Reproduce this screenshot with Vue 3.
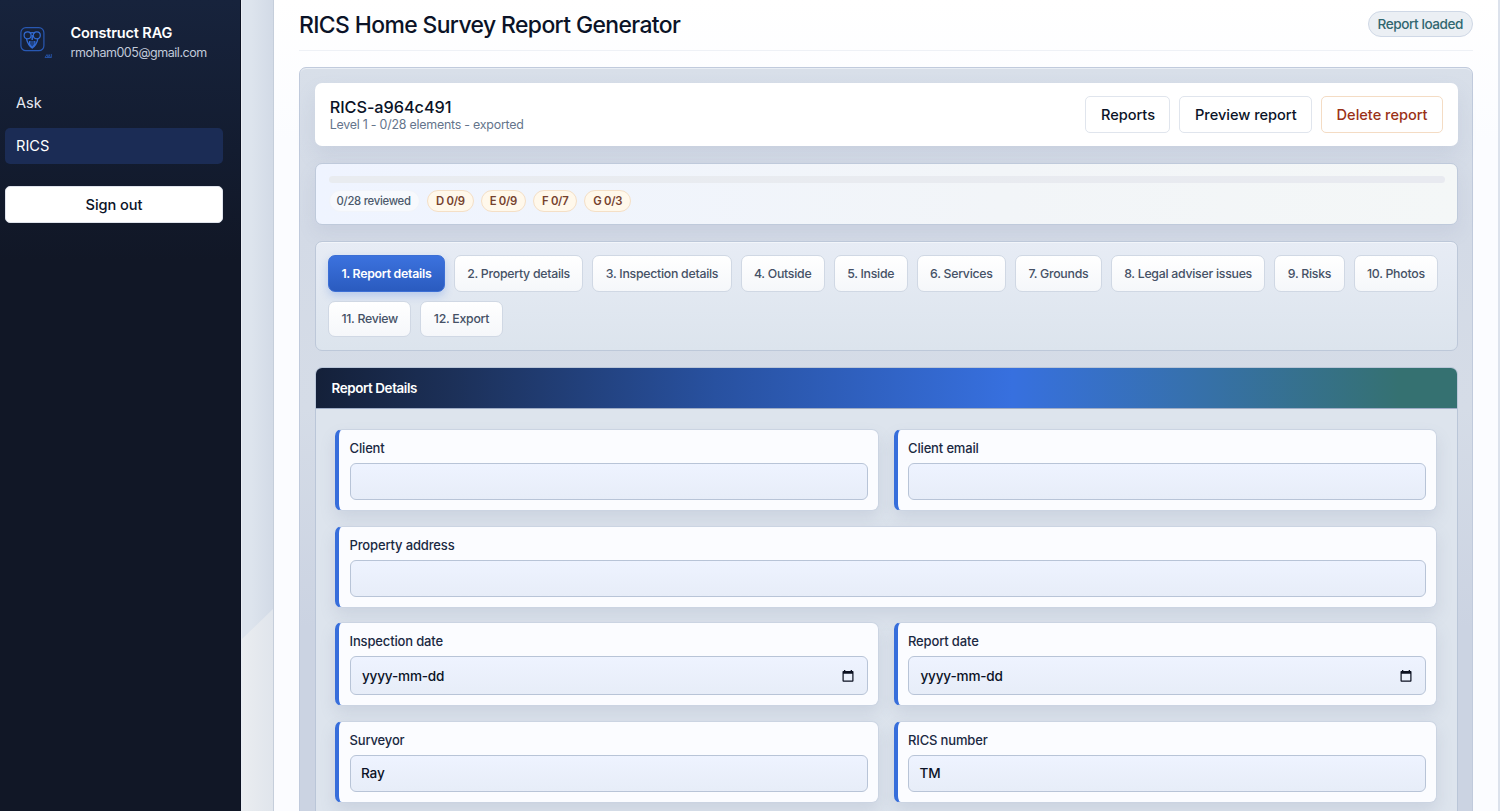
<script setup>
const tabs = [
  '1. Report details', '2. Property details', '3. Inspection details', '4. Outside', '5. Inside',
  '6. Services', '7. Grounds', '8. Legal adviser issues', '9. Risks', '10. Photos', '11. Review', '12. Export',
]
const chips = ['D 0/9', 'E 0/9', 'F 0/7', 'G 0/3']
const fields = [
  { label: 'Client', value: '' },
  { label: 'Client email', value: '' },
  { label: 'Property address', value: '', wide: true },
  { label: 'Inspection date', value: 'yyyy-mm-dd', date: true },
  { label: 'Report date', value: 'yyyy-mm-dd', date: true },
  { label: 'Surveyor', value: 'Ray' },
  { label: 'RICS number', value: 'TM' },
]
</script>

<template>
  <div class="app">
    <aside class="sidebar">
      <div class="brand">
        <svg class="logo" width="36" height="38" viewBox="0 0 36 38" fill="none">
          <rect x="3.900" y="3.700" width="23" height="23" rx="5" stroke="#2858b2" stroke-width="1.2" />
          <g stroke="#326bd4" stroke-width="1.200">
            <circle cx="10.600" cy="11.300" r="3.500" />
            <circle cx="19.800" cy="11.300" r="3.500" />
            <path d="M12.700 9.300q2.500-1.500 5 0" />
            <path d="M9.500 15c.8 3.500 2.200 6.600 5.700 9 3.500-2.400 4.900-5.500 5.700-9" />
            <path d="M15.200 11v5" stroke-width="1.500" />
            <path d="M12.700 17l-.3 3 2.800 3.500 2.800-3.500-.3-3" fill="#2858b2" fill-opacity=".6" />
          </g>
          <path d="M28 33.500l2-3 1 3M31.500 33.500l.6-3 1.200 3M34.300 30v3.500M28 33.500h6.500" stroke="#244f9f" stroke-width="1" />
        </svg>
        <div class="who">
          <strong>Construct RAG</strong>
          <span>rmoham005@gmail.com</span>
        </div>
      </div>
      <nav>
        <a>Ask</a>
        <a class="active">RICS</a>
      </nav>
      <button class="signout">Sign out</button>
    </aside>
    <div class="gutter"></div>
    <main class="shell">
      <header class="top">
        <h1>RICS Home Survey Report Generator</h1>
        <span class="status">Report loaded</span>
      </header>
      <section class="workspace">
        <div class="summary">
          <div class="ident">
            <h2>RICS-a964c491</h2>
            <p>Level 1 - 0/28 elements - exported</p>
          </div>
          <div class="actions">
            <button>Reports</button>
            <button>Preview report</button>
            <button class="danger">Delete report</button>
          </div>
        </div>
        <div class="progress">
          <div class="bar"></div>
          <div class="chips">
            <span class="chip plain">0/28 reviewed</span>
            <span v-for="c in chips" :key="c" class="chip">{{ c }}</span>
          </div>
        </div>
        <div class="tabs">
          <button v-for="(t, i) in tabs" :key="t" :class="{ on: i === 0 }">{{ t }}</button>
        </div>
        <div class="panel">
          <h3>Report Details</h3>
          <div class="grid">
            <label v-for="f in fields" :key="f.label" class="field" :class="{ wide: f.wide }">
              <span class="name">{{ f.label }}</span>
              <span class="input" :class="{ date: f.date }">
                <span>{{ f.value }}</span>
                <svg v-if="f.date" width="12" height="12" viewBox="0 0 12 12">
                  <path fill="#0b1020" fill-rule="evenodd" d="M2 0h1.300v1h5.400V0H10v1h.700a.800.800 0 0 1 .800.800v9a.900.900 0 0 1-.900.900H1.400a.900.900 0 0 1-.900-.900v-9A.800.800 0 0 1 1.300 1H2zM1.700 3.700v6.800h8.600V3.700z" />
                </svg>
              </span>
            </label>
          </div>
        </div>
      </section>
    </main>
  </div>
</template>

<style>
body { overflow: hidden; }
</style>

<style scoped>
* { box-sizing: border-box; margin: 0; }
.app {
  display: flex; width: 1500px; height: 811px; overflow: hidden;
  font-family: Inter, "Liberation Sans", sans-serif; color: #0b1327; background: #fff;
}
button { font-family: inherit; white-space: nowrap; padding: 0; }
.sidebar {
  flex: 0 0 241px; padding: 21px 17px 0 5px;
  background: linear-gradient(180deg, #17233c 0, #131c30 150px, #111726 260px, #111726 100%);
  border-right: 1px solid #0b1121;
}
.brand { display: flex; padding-left: 12px; height: 64px; }
.logo { flex: none; margin-top: 3px; }
.who { margin-left: 17.500px; display: flex; flex-direction: column; padding-top: 2px; }
.who strong { font-size: 14.500px; line-height: 20px; font-weight: 600; color: #fff; letter-spacing: -.15px; }
.who span { font-size: 12.500px; line-height: 18px; color: #c1cada; margin-top: 1px; letter-spacing: -.46px; }
nav { display: flex; flex-direction: column; gap: 7px; }
nav a { height: 36px; line-height: 37px; padding-left: 11px; font-size: 14.600px; color: #e6eaf2; border-radius: 5px; }
nav a.active { background: #1b2c55; color: #fff; }
.signout {
  display: block; width: 100%; height: 37px; margin-top: 22px; border: 1px solid #dfe3ec; border-radius: 5px;
  background: #fff; font-size: 14.600px; font-weight: 500; color: #0b1327; letter-spacing: -.05px;
}
.gutter {
  flex: 0 0 33px; border-left: 1px solid #e9edf3; border-right: 1px solid #c5cedb;
  background:
    linear-gradient(90deg, rgba(190, 200, 218, 0) 30%, rgba(190, 200, 218, .35) 100%),
    #dde4ed;
  position: relative;
}
.gutter::after {
  content: ""; position: absolute; inset: 609px 0 0 0;
  clip-path: polygon(0 30px, 100% 0, 100% 100%, 0 100%);
  background: linear-gradient(90deg, #eaedf0, #e0e5ec);
}
.shell {
  flex: 1; padding: 0 25px 0 25px; border-right: 2px solid #dce2ec;
  background: linear-gradient(180deg, #fff, #fbfcff 140px);
}
.top {
  display: flex; align-items: center; justify-content: space-between;
  height: 51px; border-bottom: 1px solid #eef1f6;
}
h1 { font-size: 22.900px; line-height: 28px; font-weight: 500; white-space: nowrap; letter-spacing: -.6px; }
.status {
  height: 26px; line-height: 24px; padding: 0 9px; font-size: 13.600px; font-weight: 500; white-space: nowrap;
  border: 1px solid #cfd8e6; border-radius: 13px; background: #ebeff4; color: #316770; letter-spacing: -.45px;
  margin-top: -2px;
}
.workspace {
  margin-top: 16px; height: 800px; padding: 15px 14px 0 15px; border: 1px solid #c0cadc; border-radius: 7px;
  background: linear-gradient(180deg, #d8dfe9, #d3dae6 160px, #d5dce7 340px, #cbd3e2 560px);
  box-shadow: inset 0 1px 0 #e8edf4;
}
.summary {
  display: flex; justify-content: space-between; align-items: center; height: 63px; padding: 0 15px 0 14.700px;
  border-radius: 7px; background: #fff; box-shadow: 0 10px 20px rgba(120, 135, 170, .14);
}
h2 { font-size: 16.300px; line-height: 20px; font-weight: 500; letter-spacing: -.06px; }
.ident p { font-size: 12.400px; line-height: 15px; color: #64748b; letter-spacing: -.22px; }
.actions { display: flex; gap: 9px; }
.actions button {
  height: 37px; padding: 0 14.500px; border: 1px solid #e0e5ed; border-radius: 5px; background: #fff;
  font-size: 14.600px; font-weight: 500; color: #0b1327; letter-spacing: -.03px;
}
.actions .danger { border-color: #f4dcc4; color: #9a3117; }
.progress {
  margin-top: 17px; height: 62px; padding: 12px 12px 0 13px; border: 1px solid #bfcadb; border-radius: 7px;
  background: linear-gradient(90deg, #eff4ff, #f2f5f8 60%, #f4f7f7);
  box-shadow: 0 8px 18px rgba(120, 135, 170, .12);
}
.bar { height: 7px; border-radius: 4px; background: linear-gradient(90deg, #e9ecf0, #e8eaf0); }
.chips { display: flex; gap: 7px; margin-top: 7px; }
.chip {
  height: 22px; line-height: 21px; padding: 0 7.900px; border-radius: 11px; border: 1px solid #f4dfc6;
  background: #fff8eb; color: #75412e; font-size: 11.300px; font-weight: 600; white-space: nowrap; letter-spacing: -.24px;
}
.chip.plain {
  background: #f7f9fd; border-color: #f1f4fa; color: #4c596b; padding: 0 8.500px 0 6.500px;
  font-weight: 500; letter-spacing: -.27px;
}
.tabs {
  display: flex; flex-wrap: wrap; align-content: flex-start; gap: 9px; margin-top: 16px; height: 110px;
  padding: 13px 12px 0; border: 1px solid #bdc8d9; border-radius: 7px;
  background: linear-gradient(180deg, #e7ecf5, #dce4ed); box-shadow: inset 0 1px 0 #f2f5fa;
}
.tabs button {
  height: 36.500px; padding: 0 12.400px; border: 1px solid #d0d8e4; border-radius: 7px; letter-spacing: -.26px;
  background: linear-gradient(180deg, #fff, #f5f7fa); color: #455166; font-size: 12.300px; font-weight: 500;
}
.tabs .on {
  color: #fff; font-weight: 600; border-color: #3c6fd5; background: linear-gradient(180deg, #3c72de, #2a5bbf);
  box-shadow: 0 4px 9px rgba(55, 110, 220, .25);
}
.panel {
  margin-top: 16px; border: 1px solid #bac6d8; border-radius: 7px 7px 0 0; overflow: hidden; height: 600px;
  background: #dde4ed;
}
h3 {
  height: 41px; line-height: 40px; padding-left: 16.500px; margin: 0 -1px; font-size: 13.400px; font-weight: 600; color: #fff;
  background: linear-gradient(90deg, #142039 0, #1c3058 12%, #2851a0 35%, #3770df 61%, #357171 95%);
  border-bottom: 1px solid #9eacc5; letter-spacing: -.4px;
}
.grid { display: grid; grid-template-columns: 1fr 1fr; gap: 14.500px 15px; padding: 20px 20px 0 19px; }
.field {
  display: block; padding: 10px 10px 10px 10.500px; border: 1px solid #cbd4e2; border-left: 4px solid #376edb;
  border-radius: 7px; background: #fbfcff; box-shadow: 0 8px 16px rgba(110, 125, 155, .16);
}
.field.wide { grid-column: 1 / -1; }
.name {
  display: block; height: 23px; line-height: 17px; font-size: 13px; font-weight: 500; color: #1a2942;
  letter-spacing: -.15px;
}
.input {
  display: flex; align-items: center; justify-content: space-between; height: 37px; padding: 0 13px 0 10.500px;
  border: 1px solid #b8c4d7; border-radius: 6px; background: linear-gradient(180deg, #eef3ff, #e7edf8);
  font-size: 13.600px; font-weight: 500; color: #0b1327; letter-spacing: -.15px;
}
.input.date { height: 39px; letter-spacing: -.2px; padding-left: 11.500px; }
</style>
